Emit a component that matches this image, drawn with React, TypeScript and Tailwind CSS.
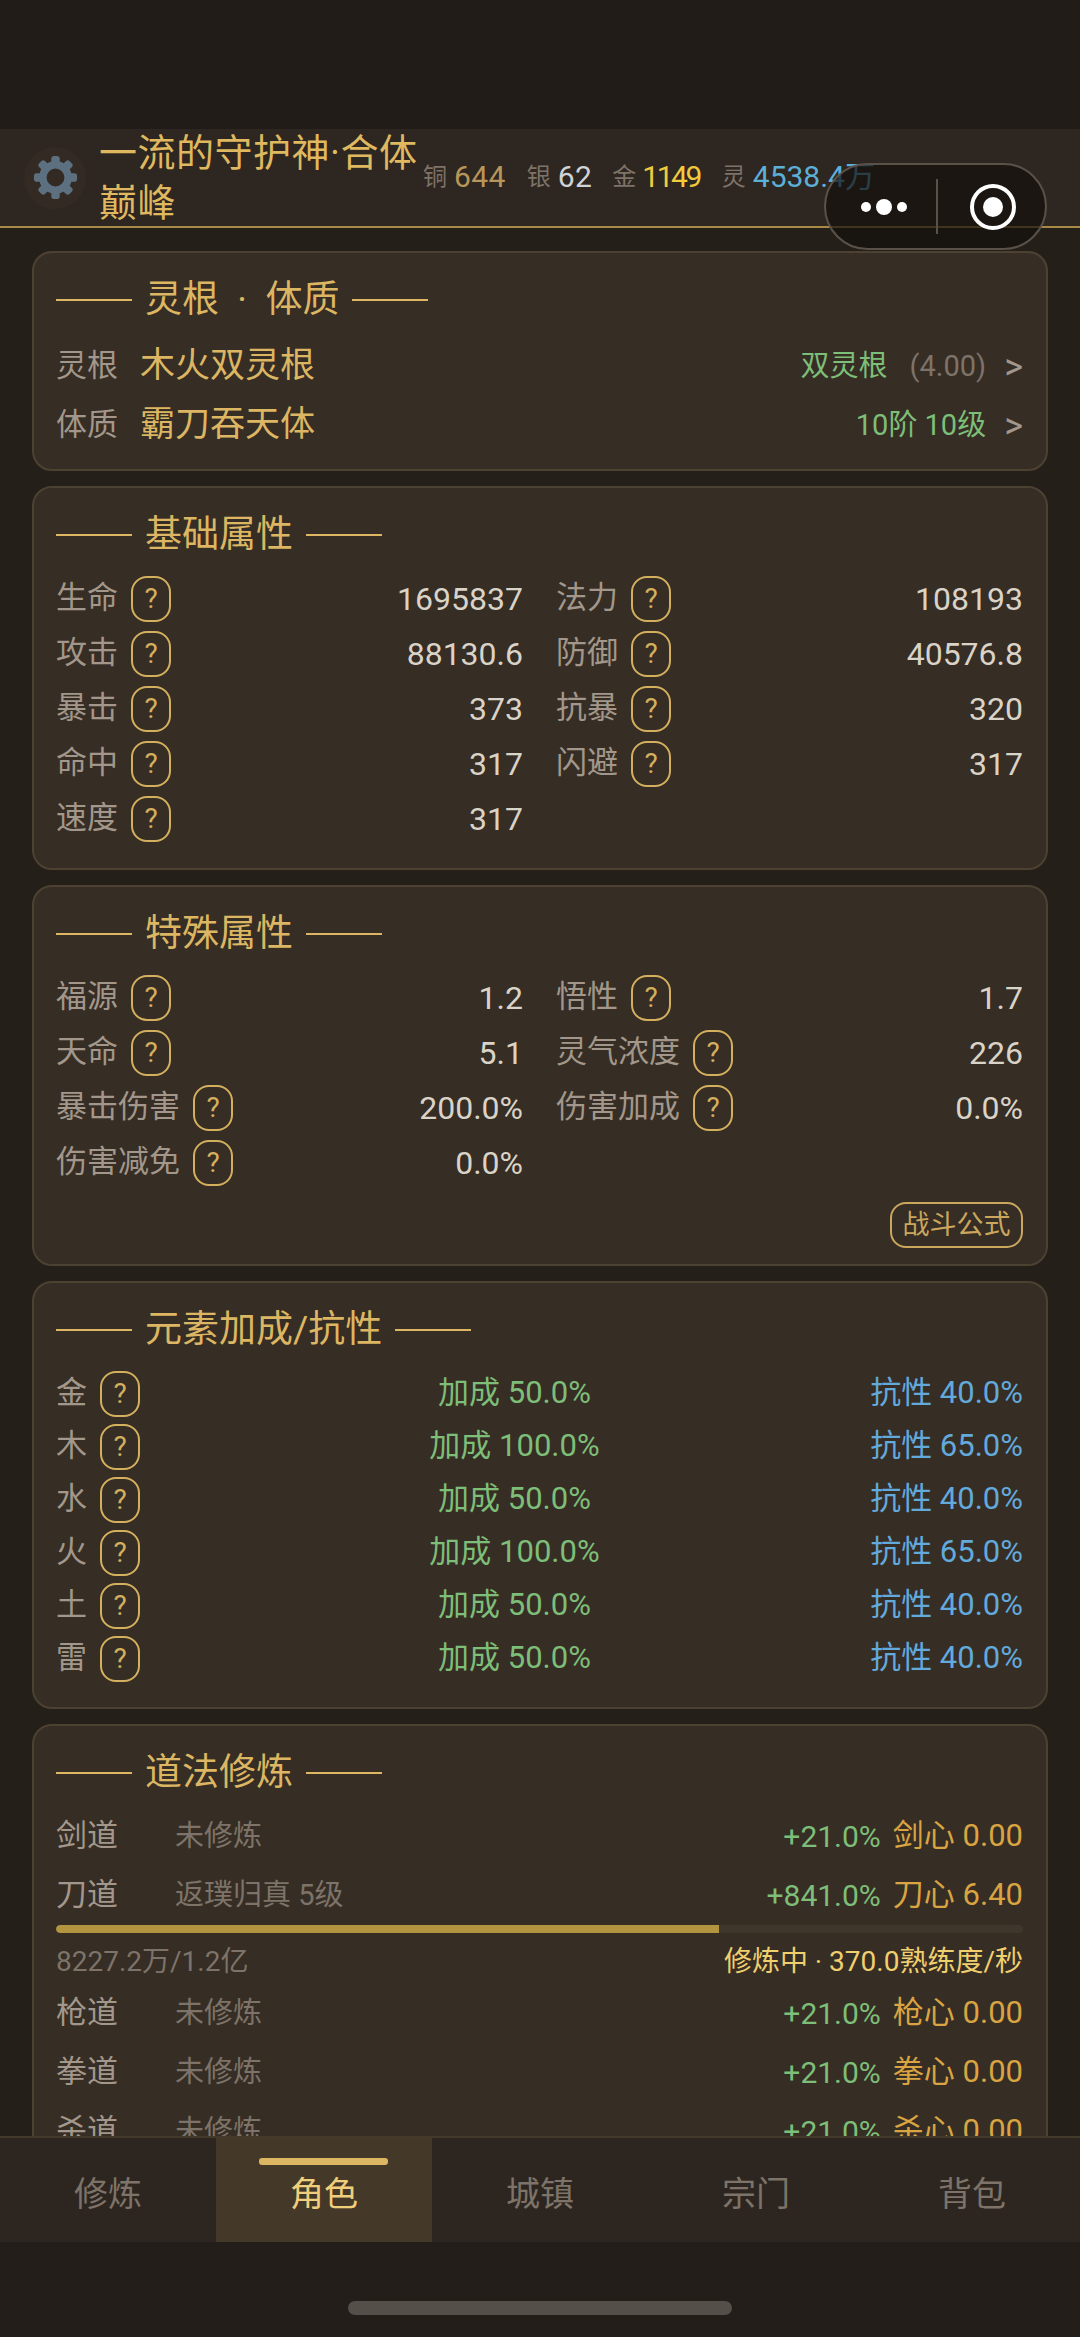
import React from 'react';

const font = "font-['Roboto','Noto_Sans_CJK_SC',sans-serif]";

const basicStats = [
  ['生命', '1695837'],
  ['法力', '108193'],
  ['攻击', '88130.6'],
  ['防御', '40576.8'],
  ['暴击', '373'],
  ['抗暴', '320'],
  ['命中', '317'],
  ['闪避', '317'],
  ['速度', '317'],
];

const specialStats = [
  ['福源', '1.2'],
  ['悟性', '1.7'],
  ['天命', '5.1'],
  ['灵气浓度', '226'],
  ['暴击伤害', '200.0%'],
  ['伤害加成', '0.0%'],
  ['伤害减免', '0.0%'],
];

const elements = [
  ['金', '50.0%', '40.0%'],
  ['木', '100.0%', '65.0%'],
  ['水', '50.0%', '40.0%'],
  ['火', '100.0%', '65.0%'],
  ['土', '50.0%', '40.0%'],
  ['雷', '50.0%', '40.0%'],
];

const tabs = ['修炼', '角色', '城镇', '宗门', '背包'];

const Help = () => (
  <span className="flex h-[46px] w-[40px] shrink-0 items-center justify-center rounded-[16px] border-2 border-[#d4b05e] text-[28px] text-[#d4b05e]">
    ?
  </span>
);

const Card = ({ title, className, children }: { title: string; className: string; children: React.ReactNode }) => (
  <section className={`shrink-0 rounded-[20px] border-2 border-[#4d4232] bg-[#362d25] pl-[22px] pr-[23px] pt-[23px] ${className}`}>
    <h2 className="flex items-center gap-[13px] whitespace-pre text-[37px] leading-[48px] font-normal text-[#dcb662]">
      <span className="h-[2px] w-[76px] bg-[#dcb662]" />
      {title}
      <span className="h-[2px] w-[76px] bg-[#dcb662]" />
    </h2>
    {children}
  </section>
);

const StatGrid = ({ stats }: { stats: string[][] }) => (
  <div className="mt-[12px] grid grid-cols-2 gap-x-[33px]">
    {stats.map(([label, value]) => (
      <div key={label} className="flex h-[55px] items-center">
        <span className="text-[31px] text-[#a2978a]">{label}</span>
        <span className="ml-[13px]">
          <Help />
        </span>
        <span className="ml-auto text-[32px] text-[#dad3c7]">{value}</span>
      </div>
    ))}
  </div>
);

const DaoRow = ({ name, status, bonus, heart }: { name: string; status: string; bonus: string; heart: string }) => (
  <div className="flex h-[59px] items-center">
    <span className="w-[119px] text-[31px] text-[#a2978a]">{name}</span>
    <span className="text-[29px] text-[#7d7368]">{status}</span>
    <span className="ml-auto text-[30px] text-[#7dbe78]">{bonus}</span>
    <span className="ml-[12px] text-[31px] text-[#d9a441]">{heart}</span>
  </div>
);

const Gear = () => (
  <svg viewBox="0 0 48 48" className="h-[45px] w-[45px]" fill="#5d7080">
    {[0, 45, 90, 135, 180, 225, 270, 315].map((a) => (
      <rect key={a} x="19.5" y="1" width="9" height="11" rx="3" transform={`rotate(${a} 24 24)`} />
    ))}
    <circle cx="24" cy="24" r="13.5" fill="none" stroke="#5d7080" strokeWidth="8" />
  </svg>
);

export default function App() {
  return (
    <div className={`relative flex h-[2337px] w-[1080px] flex-col overflow-hidden bg-[#241f19] ${font}`}>
      <div className="h-[129px] shrink-0 bg-[#211c18]" />
      <header className="flex h-[99px] shrink-0 items-center overflow-hidden border-b-2 border-[#a88a45] bg-[#2e2620] pl-[24px]">
        <div className="flex h-[62px] w-[62px] shrink-0 items-center justify-center rounded-full bg-[#332a23]">
          <Gear />
        </div>
        <div className="ml-[13px] w-[324px] shrink-0 whitespace-nowrap text-[38px] leading-[50px] tracking-[0.5px] text-[#dfb85f]">
          一流的守护神·合体
          <br />
          巅峰
        </div>
        <div className="mb-[2px] flex shrink-0 items-center whitespace-nowrap text-[30px]">
          <span className="text-[24px] text-[#7d7368]">铜</span>
          <span className="ml-[7px] text-[#b8955a] tracking-[0.4px]">644</span>
          <span className="ml-[21px] text-[24px] text-[#7d7368]">银</span>
          <span className="ml-[7px] text-[#cfd2d6] tracking-[0.4px]">62</span>
          <span className="ml-[20px] text-[24px] text-[#7d7368]">金</span>
          <span className="ml-[6px] text-[#f0cc3c] tracking-[-2.5px]">1149</span>
          <span className="ml-[22px] text-[24px] text-[#7d7368]">灵</span>
          <span className="ml-[7px] text-[#5cb0d8]">4538.4万</span>
        </div>
      </header>

      <main className="flex min-h-0 flex-1 flex-col gap-[15px] overflow-hidden px-[32px] pt-[23px]">
        <Card title="灵根  ·  体质" className="pb-[14px]">
          <div className="mt-[13px] flex h-[59px] items-center">
            <span className="text-[31px] text-[#a2978a]">灵根</span>
            <span className="ml-[22px] text-[35px] text-[#dcb662]">木火双灵根</span>
            <span className="ml-auto text-[29px] text-[#7dbe78]">双灵根</span>
            <span className="ml-[22px] text-[29px] text-[#7d7368]">(4.00)</span>
            <span className="ml-[18px] text-[36px] leading-none text-[#a2978a]">&gt;</span>
          </div>
          <div className="flex h-[59px] items-center">
            <span className="text-[31px] text-[#a2978a]">体质</span>
            <span className="ml-[22px] text-[35px] text-[#dcb662]">霸刀吞天体</span>
            <span className="ml-auto text-[29px] text-[#7dbe78]">10阶 10级</span>
            <span className="ml-[18px] text-[36px] leading-none text-[#a2978a]">&gt;</span>
          </div>
        </Card>

        <Card title="基础属性" className="pb-[22px]">
          <StatGrid stats={basicStats} />
        </Card>

        <Card title="特殊属性" className="pb-[16px]">
          <StatGrid stats={specialStats} />
          <div className="mt-[12px] flex justify-end">
            <span className="flex h-[46px] w-[133px] items-center justify-center rounded-[16px] border-2 border-[#cba75e] text-[27px] text-[#cba75e]">
              战斗公式
            </span>
          </div>
        </Card>

        <Card title="元素加成/抗性" className="pb-[22px]">
          <div className="mt-[13px] flex flex-col">
            {elements.map(([name, bonus, resist]) => (
              <div key={name} className="grid h-[53px] grid-cols-[180px_1fr_230px] items-center text-[31px]">
                <span className="flex items-center gap-[13px] text-[31px] text-[#a2978a]">
                  {name}
                  <Help />
                </span>
                <span className="text-center text-[#7dbe78]">加成 {bonus}</span>
                <span className="text-right text-[#62a9dc]">抗性 {resist}</span>
              </div>
            ))}
          </div>
        </Card>

        <Card title="道法修炼" className="pb-[20px]">
          <div className="mt-[10px]">
            <DaoRow name="剑道" status="未修炼" bonus="+21.0%" heart="剑心 0.00" />
            <DaoRow name="刀道" status="返璞归真 5级" bonus="+841.0%" heart="刀心 6.40" />
            <div className="h-[8px] w-full overflow-hidden rounded-full bg-[#40372c]">
              <div className="h-full w-[68.6%] rounded-l-full bg-[#b3953f]" />
            </div>
            <div className="mt-[7px] flex h-[44px] items-center justify-between text-[28px]">
              <span className="text-[#7d7368]">8227.2万/1.2亿</span>
              <span className="text-[#f0cf6e]">修炼中 · 370.0熟练度/秒</span>
            </div>
            <DaoRow name="枪道" status="未修炼" bonus="+21.0%" heart="枪心 0.00" />
            <DaoRow name="拳道" status="未修炼" bonus="+21.0%" heart="拳心 0.00" />
            <DaoRow name="杀道" status="未修炼" bonus="+21.0%" heart="杀心 0.00" />
          </div>
        </Card>
      </main>

      <nav className="grid h-[106px] shrink-0 grid-cols-5 border-t-2 border-[#443a2b] bg-[#2d2620]">
        {tabs.map((tab) => (
          <div
            key={tab}
            className={`relative flex items-center justify-center pt-[8px] text-[34px] ${
              tab === '角色' ? 'bg-[#443828] text-[#f0cf7c]' : 'text-[#7d7368]'
            }`}
          >
            {tab === '角色' && <span className="absolute left-[43px] top-[20px] h-[7px] w-[129px] rounded-[3px] bg-[#dcb662]" />}
            {tab}
          </div>
        ))}
      </nav>
      <div className="flex h-[95px] shrink-0 justify-center bg-[#231e19] pt-[59px]">
        <div className="h-[14px] w-[384px] rounded-full bg-[#545049]" />
      </div>

      {/* mini program capsule floats over the header */}
      <div className="absolute left-[824px] top-[163px] flex h-[87px] w-[223px] items-center rounded-full border-2 border-[#5a5248] bg-[#14100c]/70">
        <div className="flex w-[110px] items-center justify-center gap-[5px] pl-[6px]">
          <span className="h-[10px] w-[10px] rounded-full bg-white" />
          <span className="h-[16px] w-[16px] rounded-full bg-white" />
          <span className="h-[10px] w-[10px] rounded-full bg-white" />
        </div>
        <div className="h-[55px] w-[2px] bg-[#5a5248]" />
        <div className="ml-[32px] flex h-[46px] w-[46px] items-center justify-center rounded-full border-[4px] border-white">
          <span className="h-[20px] w-[20px] rounded-full bg-white" />
        </div>
      </div>
    </div>
  );
}
